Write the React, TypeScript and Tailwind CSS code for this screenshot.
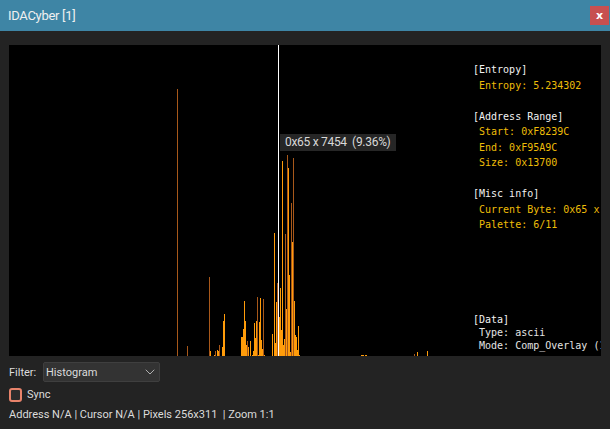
import { ChevronDown } from 'lucide-react'

// x, top of bar, dim
const bars: [number, number, boolean?][] = [
  [177, 89, true], [187, 346, true], [209, 277, true], [210, 351], [214, 355], [215, 351, true],
  [217, 350], [218, 351], [219, 345, true], [222, 347], [223, 321], [224, 314],
  [241, 337], [242, 337], [243, 329], [244, 301], [245, 321], [246, 345], [247, 341, true], [248, 347],
  [250, 341], [252, 355], [253, 351], [254, 323], [255, 338], [256, 321], [257, 297, true], [258, 355],
  [259, 322], [260, 298], [261, 340], [262, 349], [263, 299, true], [264, 355],
  [272, 334], [274, 233], [275, 343], [276, 302], [277, 283, true], [279, 317], [280, 288], [281, 330],
  [282, 161], [283, 345], [284, 339], [285, 234, true], [286, 309], [287, 155, true], [288, 168], [289, 275],
  [290, 352], [291, 203, true], [292, 242], [293, 158, true], [294, 301], [295, 335], [296, 337], [297, 350],
  [298, 326], [299, 355],
  [361, 355], [362, 355], [363, 355], [365, 355], [366, 355], [414, 354, true], [417, 352], [427, 351],
]

function Histogram() {
  return (
    <svg width="452" height="311" className="shrink-0" shapeRendering="crispEdges">
      {bars.map(([x, top, dim]) => (
        <rect key={x} x={x - 9} y={top - 45} width="1" height={356 - top} fill={dim ? '#a8581a' : '#ff9c0a'} />
      ))}
      <rect x="269" y="0" width="1" height="311" fill="#ffffff" />
    </svg>
  )
}

function Info() {
  return (
    <div className="flex-1 min-w-0 overflow-hidden flex flex-col whitespace-pre pl-[12px] pt-[17px] font-['DejaVu_Sans_Mono',monospace] text-[10px] leading-[15.5px] text-[#eebd08]">
      <div className="text-[#f2f2f2]">[Entropy]</div>
      <div> Entropy: 5.234302</div>
      <div className="mt-[15.5px] text-[#f2f2f2]">[Address Range]</div>
      <div> Start: 0xF8239C</div>
      <div> End: 0xF95A9C</div>
      <div> Size: 0x13700</div>
      <div className="mt-[15.5px] text-[#f2f2f2]">[Misc info]</div>
      <div> Current Byte: 0x65 x</div>
      <div> Palette: 6/11</div>
      <div className="mt-auto mb-[4px] leading-[13px] text-[#e4e4e4]">
        <div className="text-[#f2f2f2]">[Data]</div>
        <div> Type: ascii</div>
        <div> Mode: Comp_Overlay (1</div>
      </div>
    </div>
  )
}

export default function App() {
  return (
    <div className="w-[610px] h-[429px] overflow-hidden flex flex-col bg-[#232323] text-[#dcdcdc] font-['Roboto',sans-serif] text-[11px]">
      <div className="h-[31px] shrink-0 bg-[#3e85a5] flex items-center justify-between pl-[8px] pr-[1px] text-[#f0f0f0]">
        <span className="text-[13px] tracking-[-0.3px]">IDACyber [1]</span>
        <div className="w-[19px] h-[19px] bg-[#c75050] flex items-center justify-center text-white font-bold text-[11px] leading-none font-['DejaVu_Sans',sans-serif]">
          x
        </div>
      </div>

      <div className="relative mx-[9px] mt-[14px] h-[311px] shrink-0 bg-black flex">
        <Histogram />
        <Info />
        <div className="absolute left-[271px] top-[89px] w-[116px] h-[17px] bg-[#262626] pl-[5px] text-[12px] tracking-[-0.3px] leading-[17px] text-[#d8d8d8] whitespace-pre">
          0x65 x 7454  (9.36%)
        </div>
      </div>

      <div className="flex items-center pl-[9px] mt-[6px] h-[20px]">
        <span className="w-[34px] pt-[2px]">Filter:</span>
        <div className="w-[117px] h-[20px] bg-[#333333] border border-[#3f3f3f] rounded-[2px] flex items-center justify-between pl-[2px] pr-[1px]">
          <span className="pt-[2px]">Histogram</span>
          <ChevronDown size={16} strokeWidth={1.25} className="text-[#c8c8c8]" />
        </div>
      </div>

      <div className="flex items-center gap-[5px] pl-[9px] mt-[6px] h-[14px]">
        <div className="w-[13px] h-[14px] border-2 border-[#e8836b] rounded-[3px] bg-[#2c2c2c]" />
        <span>Sync</span>
      </div>

      <div className="pl-[9px] mt-[5px] leading-[16px] whitespace-pre">
        Address N/A | Cursor N/A | Pixels 256x311  | Zoom 1:1
      </div>
    </div>
  )
}
